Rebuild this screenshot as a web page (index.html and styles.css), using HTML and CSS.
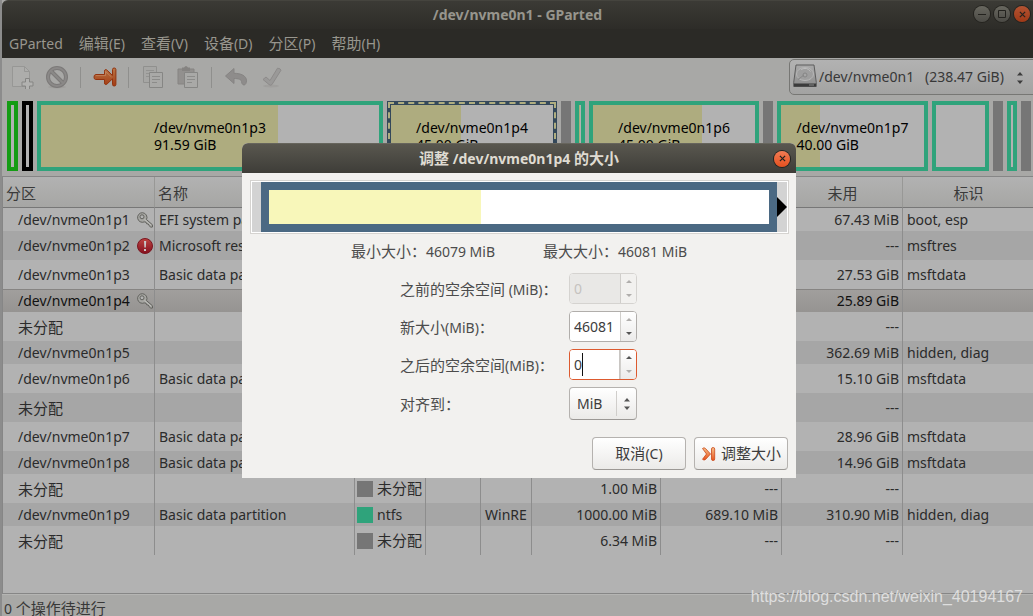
FILE: index.html
```html
<!DOCTYPE html>
<html lang="zh-CN">
<head>
<meta charset="utf-8">
<title>/dev/nvme0n1 - GParted</title>
<link rel="stylesheet" href="styles.css">
</head>
<body>
<svg class="defs" aria-hidden="true">
  <defs>
    <linearGradient id="orange" x1="0" y1="0" x2="0" y2="1"><stop offset="0" stop-color="#b97747"/><stop offset="1" stop-color="#a33a12"/></linearGradient>
    <linearGradient id="bright" x1="0" y1="0" x2="0" y2="1"><stop offset="0" stop-color="#f7c088"/><stop offset="1" stop-color="#e8521c"/></linearGradient>
    <linearGradient id="metal" x1="0" y1="0" x2="0" y2="1"><stop offset="0" stop-color="#a9a9a9"/><stop offset="1" stop-color="#8d8d8d"/></linearGradient>
    <linearGradient id="red" x1="0" y1="0" x2="0" y2="1"><stop offset="0" stop-color="#bd4440"/><stop offset="1" stop-color="#85101f"/></linearGradient>
    <symbol id="key" viewBox="0 0 16 16">
      <path d="M5.5.7a4.8 4.8 0 1 0 1.8 9.2l1.7.3.7 1.6 1.6.2.7 1.6 1.9 1.6 1.6-.2.1-2.1-6.1-5.3A4.8 4.8 0 0 0 5.500.7Z" fill="#a6a6a2" stroke="#62625e" stroke-width="1"/>
      <circle cx="5" cy="4.800" r="2" fill="#b4b4b4" stroke="#62625e"/>
      <path d="M7.500 7.500 14 13" stroke="#c2c2be" stroke-width=".9"/>
    </symbol>
    <symbol id="cross" viewBox="0 0 8 8"><path d="M1 1 7 7M7 1 1 7" fill="none" stroke="currentColor" stroke-width="1.400"/></symbol>
  </defs>
</svg>

<div class="window">
  <header class="titlebar">
    <h1>/dev/nvme0n1 - GParted</h1>
    <div class="controls">
      <button class="ctl" aria-label="最小化"><svg viewBox="0 0 8 8"><path d="M0 4.500H8" stroke="currentColor"/></svg></button>
      <button class="ctl" aria-label="最大化"><svg viewBox="0 0 8 8"><path d="M.5.5h7v7h-7z" fill="none" stroke="currentColor"/></svg></button>
      <button class="ctl ctl-close" aria-label="关闭"><svg><use href="#cross"/></svg></button>
    </div>
  </header>

  <nav class="menubar">
    <button class="lat">GParted</button>
    <button>编辑<span class="lat">(E)</span></button>
    <button>查看<span class="lat">(V)</span></button>
    <button>设备<span class="lat">(D)</span></button>
    <button>分区<span class="lat">(P)</span></button>
    <button>帮助<span class="lat">(H)</span></button>
  </nav>

  <div class="toolbar">
    <div class="tools">
      <button class="tool" aria-label="新建" disabled><svg viewBox="0 0 24 24"><path d="M2.500 1.500h12l5 5v15h-17z" fill="#adadab" stroke="#979795"/><path d="M14.500 1.500v5h5" fill="none" stroke="#979795"/><path d="M15.500 13.500h4v3.500h3.500v4h-3.500v3.500h-4V21H12v-4h3.500z" fill="#b2b2b0" stroke="#858583"/></svg></button>
      <button class="tool" aria-label="删除" disabled><svg viewBox="0 0 24 24"><ellipse cx="12" cy="22" rx="9" ry="1.500" fill="#a09f9d"/><circle cx="12" cy="12" r="9" fill="none" stroke="#7c7a79" stroke-width="4"/><path d="M5.500 5.500 18.500 18.500" stroke="#7c7a79" stroke-width="4"/><circle cx="12" cy="12" r="9" fill="none" stroke="#8b8988" stroke-width="2"/><path d="M6 6 18 18" stroke="#8b8988" stroke-width="2"/></svg></button>
      <span class="sep"></span>
      <button class="tool" aria-label="调整大小/移动"><svg viewBox="0 0 24 24"><path d="M2.500 9.500h9V6.200c0-2 1.600-2 2.700-.9l5.300 5.200V4.500q0-1.500 1.700-1.500t1.700 1.500v15q0 1.500-1.700 1.500t-1.700-1.500v-5.700l-5.300 5.100c-1.100 1-2.700 1-2.700-1v-3.400h-9q-1.500-.2-1.500-2.400t1.500-2.600Z" fill="url(#orange)" stroke="#92330f"/><path d="M3 10.600h9.500V6.500l6 5.500" fill="none" stroke="#c58b64" stroke-width=".7"/></svg></button>
      <span class="sep"></span>
      <button class="tool" aria-label="复制" disabled><svg viewBox="0 0 24 24"><path d="M2.500 1.500h13v16h-13z" fill="#a6a6a4" stroke="#90908e"/><path d="M5 5.500h8M5 8.500h8M5 11.500h3" stroke="#939391"/><path d="M8.500 7.500h13v15h-13z" fill="#a9a9a7" stroke="#868684"/><path d="M11 11.500h8M11 14.500h8M11 17.500h5" stroke="#8c8c8a"/></svg></button>
      <button class="tool" aria-label="粘贴" disabled><svg viewBox="0 0 24 24"><path d="M2 4h16v15H2z" fill="#92908e" stroke="#868482"/><path d="M6 2.500h2q2-3 4 0h2V6H6z" fill="#858381"/><path d="M8.500 7.500h13v15h-13z" fill="#a9a9a7" stroke="#868684"/><path d="M11 11.500h8M11 14.500h8M11 17.500h5" stroke="#8c8c8a"/></svg></button>
      <span class="sep"></span>
      <button class="tool" aria-label="撤消" disabled><svg viewBox="0 0 24 24"><path d="M1.500 11 10 3.500v4.800c7 0 12.500 2.500 12.500 7.500 0 2-1 4.200-2.500 4.200s-2.500-2-2.500-3.500c0-2-3-3-7.500-3v5z" fill="#8e8c8b" stroke="#868483"/></svg></button>
      <button class="tool" aria-label="应用" disabled><svg viewBox="0 0 24 24"><ellipse cx="12" cy="21" rx="8" ry="1.500" fill="#a09f9d"/><path d="M4 14.500 7 12l4 3.500 7.500-12.300q3 0 3.500 2L13 19.500q-1.500 1.500-3 0Z" fill="#9a9998" stroke="#8d8b8a"/></svg></button>
    </div>
    <div class="device">
      <svg class="disk" viewBox="0 0 24 24"><path d="M3 1h18l2.300 17.500v4H.7v-4z" fill="url(#metal)" stroke="#5d5d5d"/><path d="M1 19.500h22v3H1z" fill="#3b3b3b"/><path d="M16 21h5" stroke="#8a8a8a"/><ellipse cx="12" cy="10" rx="8.500" ry="6.500" fill="#9e9e9e" stroke="#b7b7b7"/><path d="M8 5.500q6-3 9.500 2" stroke="#bdbdbd" fill="none"/><circle cx="12" cy="11" r="2" fill="#a6a6a6" stroke="#858585"/><path d="M5 15.500 11 11" stroke="#868686"/></svg>
      <select aria-label="设备"><option>/dev/nvme0n1 &nbsp;&nbsp;(238.47 GiB)</option></select>
      <svg class="updown" viewBox="0 0 6 12"><path d="M0 3.500 3 0 6 3.500zM0 8.500 3 12 6 8.500z" fill="currentColor"/></svg>
    </div>
  </div>

  <div class="diskmap">
    <div class="part fat"></div>
    <div class="part unknown"></div>
    <div class="part"><i class="used u70"></i><p>/dev/nvme0n1p3<br>91.59 GiB</p></div>
    <div class="part picked"><i class="used u43"></i><p>/dev/nvme0n1p4<br>45.00 GiB</p></div>
    <div class="part free"></div>
    <div class="part"><i class="used u50"></i></div>
    <div class="part"><i class="used u67"></i><p>/dev/nvme0n1p6<br>45.00 GiB</p></div>
    <div class="part free"></div>
    <div class="part"><i class="used u27"></i><p>/dev/nvme0n1p7<br>40.00 GiB</p></div>
    <div class="part"></div>
    <div class="part free"></div>
    <div class="part"></div>
    <div class="part free"></div>
  </div>

  <main class="list">
    <table>
      <colgroup><col class="c-part"><col class="c-name"><col class="c-fs"><col class="c-mount"><col class="c-label"><col class="c-size"><col class="c-used"><col class="c-unused"><col></colgroup>
      <thead><tr><th class="left">分区</th><th class="left">名称</th><th></th><th></th><th></th><th></th><th></th><th>未用</th><th>标识</th></tr></thead>
      <tbody>
        <tr class="low"><td><div class="dev">/dev/nvme0n1p1<svg><use href="#key"/></svg></div></td><td>EFI system partition</td><td></td><td></td><td></td><td></td><td></td><td class="num">67.43 MiB</td><td>boot, esp</td></tr>
        <tr><td><div class="dev">/dev/nvme0n1p2<svg viewBox="0 0 16 16"><circle cx="8" cy="8" r="7.500" fill="url(#red)" stroke="#7b1520"/><path d="M7 3h2.200L8.800 9.500H7.400zM7 11h2v2H7z" fill="#c9c9c9"/></svg></div></td><td>Microsoft reserved partition</td><td></td><td></td><td></td><td></td><td></td><td class="num">---</td><td>msftres</td></tr>
        <tr><td><div class="dev">/dev/nvme0n1p3</div></td><td>Basic data partition</td><td></td><td></td><td></td><td></td><td></td><td class="num">27.53 GiB</td><td>msftdata</td></tr>
        <tr class="low selected"><td><div class="dev">/dev/nvme0n1p4<svg><use href="#key"/></svg></div></td><td></td><td></td><td></td><td></td><td></td><td></td><td class="num">25.89 GiB</td><td></td></tr>
        <tr><td><div class="dev zh">未分配</div></td><td></td><td></td><td></td><td></td><td></td><td></td><td class="num">---</td><td></td></tr>
        <tr class="low"><td><div class="dev">/dev/nvme0n1p5</div></td><td></td><td></td><td></td><td></td><td></td><td></td><td class="num">362.69 MiB</td><td>hidden, diag</td></tr>
        <tr><td><div class="dev">/dev/nvme0n1p6</div></td><td>Basic data partition</td><td></td><td></td><td></td><td></td><td></td><td class="num">15.10 GiB</td><td>msftdata</td></tr>
        <tr><td><div class="dev zh">未分配</div></td><td></td><td></td><td></td><td></td><td></td><td></td><td class="num">---</td><td></td></tr>
        <tr><td><div class="dev">/dev/nvme0n1p7</div></td><td>Basic data partition</td><td></td><td></td><td></td><td></td><td></td><td class="num">28.96 GiB</td><td>msftdata</td></tr>
        <tr class="low"><td><div class="dev">/dev/nvme0n1p8</div></td><td>Basic data partition</td><td></td><td></td><td></td><td></td><td></td><td class="num">14.96 GiB</td><td>msftdata</td></tr>
        <tr><td><div class="dev zh">未分配</div></td><td></td><td><div class="fs zh"><i></i>未分配</div></td><td></td><td></td><td class="num">1.00 MiB</td><td class="num">---</td><td class="num">---</td><td></td></tr>
        <tr class="low"><td><div class="dev">/dev/nvme0n1p9</div></td><td>Basic data partition</td><td><div class="fs ntfs"><i></i>ntfs</div></td><td></td><td>WinRE</td><td class="num">1000.00 MiB</td><td class="num">689.10 MiB</td><td class="num">310.90 MiB</td><td>hidden, diag</td></tr>
        <tr><td><div class="dev zh">未分配</div></td><td></td><td><div class="fs zh"><i></i>未分配</div></td><td></td><td></td><td class="num">6.34 MiB</td><td class="num">---</td><td class="num">---</td><td></td></tr>
      </tbody>
    </table>
  </main>
  <footer class="status"><span class="lat">0 </span>个操作待进行</footer>
</div>

<section class="dialog" role="dialog" aria-labelledby="dlg-title">
  <header class="dialog-title">
    <h2 id="dlg-title"><span class="zh">调整</span> /dev/nvme0n1p4 <span class="zh">的大小</span></h2>
    <button class="ctl ctl-close lit" aria-label="关闭"><svg><use href="#cross"/></svg></button>
  </header>
  <div class="dialog-body">
    <div class="resizer">
      <div class="resizer-part"><i></i></div>
      <svg class="grip" viewBox="0 0 10 20"><path d="M0 0 10 10 0 20z" fill="#000"/></svg>
    </div>
    <div class="limits"><span>最小大小&#xFF1A;<span class="lat">46079 MiB</span></span><span>最大大小&#xFF1A;<span class="lat">46081 MiB</span></span></div>
    <form class="fields">
      <label for="before">之前的空余空间<span class="lat"> (MiB)</span>&#xFF1A;</label>
      <div class="spin off"><input id="before" value="0" disabled><div class="steps"><button type="button" aria-label="增加" disabled></button><button type="button" class="down" aria-label="减少" disabled></button></div></div>
      <label for="size">新大小<span class="lat">(MiB)</span>&#xFF1A;</label>
      <div class="spin"><input id="size" value="46081"><div class="steps"><button type="button" aria-label="增加" disabled></button><button type="button" class="down" aria-label="减少"></button></div></div>
      <label for="after">之后的空余空间<span class="lat">(MiB)</span>&#xFF1A;</label>
      <div class="spin active"><input id="after" value="0"><span class="caret"></span><div class="steps"><button type="button" aria-label="增加"></button><button type="button" class="down" aria-label="减少" disabled></button></div></div>
      <label for="align">对齐到&#xFF1A;</label>
      <div class="align"><select id="align"><option>MiB</option></select><svg class="updown" viewBox="0 0 6 12"><path d="M0 3.500 3 0 6 3.500zM0 8.500 3 12 6 8.500z" fill="currentColor"/></svg></div>
    </form>
    <div class="actions">
      <button class="btn"><span>取消<span class="lat">(C)</span></span></button>
      <button class="btn"><svg viewBox="0 0 16 16"><path d="M1.500 2.500q1.500-1.500 3 0L9.500 8l-5 5.500q-1.500 1.200-3-.2L5.500 8z" fill="url(#bright)" stroke="#c9471b" stroke-width=".8"/><rect x="10.500" y="1.500" width="3.200" height="13" rx="1.500" fill="url(#bright)" stroke="#c9471b" stroke-width=".8"/></svg>调整大小</button>
    </div>
  </div>
</section>

<div class="watermark">https://blog.csdn.net/weixin_40194167</div>
</body>
</html>
```
FILE: styles.css
```css
* { box-sizing: border-box; }
body {
  margin: 0;
  height: 100vh;
  overflow: hidden;
  position: relative;
  background: #8c8c8c;
  color: #2b2b2b;
  font: 14px/17px "Noto Sans", "Noto Sans CJK JP", sans-serif;
}
button, select, input { font: inherit; color: inherit; margin: 0; }
button { border: 0; padding: 0; background: none; }
select { appearance: none; }
h1, h2, p { margin: 0; font-size: 14px; }
.defs { position: absolute; width: 0; height: 0; }
.lat { font-size: 14px; white-space: pre; }
.zh { font-size: 15px; }

.window {
  height: 100%;
  margin-left: 2px;
  display: flex;
  flex-direction: column;
  background: #a8a8a6;
}

/* Title bar and menu */
.titlebar {
  height: 29px;
  flex: none;
  display: grid;
  grid-template-columns: 1fr auto 1fr;
  align-items: center;
  border-radius: 6px 0 0 0;
  border-top: 1px solid #45443e;
  background: linear-gradient(#3b3a35, #2d2c28);
  color: #97958d;
}
.titlebar h1 { grid-column: 2; padding-bottom: 2px; }
.controls { display: flex; gap: 4px; justify-content: flex-end; padding: 0 3px 2px 0; }
.ctl {
  width: 16px;
  height: 16px;
  border-radius: 50%;
  display: grid;
  place-items: center;
  background: linear-gradient(#68675f, #4b4a45);
  box-shadow: 0 0 0 1px #24231f;
  color: #23221e;
}
.ctl svg { width: 8px; height: 8px; }
.ctl-close { background: linear-gradient(#b35332, #9f3917); }
.ctl-close.lit { background: linear-gradient(#f37c54, #e4501f); }
.ctl-close svg { width: 7px; height: 7px; }
.menubar {
  height: 29px;
  flex: none;
  display: flex;
  align-items: center;
  gap: 16px;
  padding: 0 7px;
  background: #2b2a26;
  color: #98968e;
  font-size: 15px;
}

/* Toolbar */
.toolbar { height: 40px; flex: none; display: flex; justify-content: space-between; align-items: flex-start; }
.tools { display: flex; align-items: center; gap: 11px; padding: 7px 8px; }
.tool { width: 24px; height: 24px; }
.tool svg { display: block; width: 24px; height: 24px; }
.sep { width: 2px; height: 21px; border-left: 1px solid #8f8f8d; }
.device { position: relative; margin: 1px -6px 0 0; }
.device select {
  width: 250px;
  height: 36px;
  padding: 0 28px 2px 29px;
  border: 1px solid #777774;
  border-radius: 5px;
  background: linear-gradient(#b2b2b2, #a3a3a2);
  color: #383838;
}
.disk { position: absolute; left: 4px; top: 5px; width: 24px; height: 24px; }
.updown { position: absolute; width: 6px; height: 12px; color: #3c3c3c; pointer-events: none; }
.device .updown { right: 16px; top: 13px; }

/* Partition map: one column per partition, in proportion */
.diskmap {
  flex: none;
  display: grid;
  grid-template-columns: 11fr 11fr 346fr 170fr 10fr 10fr 170fr 10fr 151fr 57fr 10fr 10fr 10fr;
  gap: 4px;
  padding: 3px 2px 5px 5px;
  color: #000;
}
.part { position: relative; min-width: 0; height: 70px; border: 4px solid #2fa37b; background: #b2b2b2; display: grid; place-items: center; }
.part p { position: relative; white-space: nowrap; }
.fat { border-color: #149c14; }
.unknown { border-color: #000; }
.free { border-color: #767676; background: #767676; }
.picked { border-color: #34485a; }
.picked::before { content: ""; position: absolute; inset: -3px; border: 2px dashed #b0ae80; }
.used { position: absolute; left: 0; top: 0; bottom: 0; background: #aeac7f; }
.u70 { width: 70%; } .u43 { width: 43%; } .u67 { width: 67%; } .u27 { width: 27%; } .u50 { width: 50%; }

/* Partition table */
.list { flex: 1; min-height: 0; overflow: hidden; background: #b2b2b2; border: 1px solid #868686; border-right: 0; }
table { width: 100%; table-layout: fixed; border-collapse: separate; border-spacing: 0; }
.c-part { width: 152px; } .c-name { width: 200px; } .c-fs { width: 71px; }
.c-mount { width: 55px; } .c-label { width: 51px; } .c-size { width: 129px; }
.c-used, .c-unused { width: 121px; }
th, td { padding: 0 3px 0 4px; border-right: 1px solid #8d8d8d; overflow: hidden; white-space: nowrap; text-align: left; }
th:last-child, td:last-child { border-right: 0; }
th {
  height: 31px;
  padding-top: 2px;
  text-align: center;
  font-weight: 400;
  font-size: 15px;
  color: #3a3a3a;
  background: linear-gradient(#b2b2b2, #a6a6a4);
  border-right-color: #989896;
  border-bottom: 1px solid #777;
}
th.left { text-align: left; padding-left: 3px; }
td { height: 29px; }
.low td { height: 23px; }
tbody tr:nth-child(even) { background: #a6a6a6; }
tbody .selected td { background: linear-gradient(#a19f9d, #969492); box-shadow: inset 0 1px #868482; color: #111; }
td:first-child { padding-right: 1px; }
.dev { display: flex; align-items: center; justify-content: space-between; padding-left: 11px; }
.dev svg { width: 16px; height: 16px; }
.dev.zh { padding-top: 2px; }
.num { text-align: right; }
.fs { display: flex; align-items: center; gap: 4px; margin-left: -2px; }
.fs i { width: 16px; height: 16px; background: #767676; }
.ntfs i { background: #2fa37b; }
.status { height: 22px; flex: none; padding: 5px 2px 0; font-size: 15px; line-height: 16px; border-top: 1px solid #b5b5b3; color: #383838; }

/* Resize dialog */
.dialog {
  position: absolute;
  left: 242px;
  top: 143px;
  width: 554px;
  border-radius: 6px 6px 0 0;
  overflow: hidden;
  background: #f2f1ef;
  color: #4c4c4c;
}
.dialog-title {
  height: 30px;
  display: grid;
  grid-template-columns: 1fr auto 1fr;
  align-items: center;
  padding: 0 6px;
  border-top: 1px solid #67655d;
  background: linear-gradient(#59574f, #3e3d38);
  color: #dfdbd2;
}
.dialog-title h2 { grid-column: 2; }
.dialog-title .ctl { justify-self: end; }
.dialog-body { padding: 7px 8px 8px; }
.resizer {
  display: flex;
  align-items: center;
  height: 54px;
  margin-right: -1px;
  padding: 1px 1px 1px 10px;
  border: 1px solid #d5d3d0;
  box-shadow: inset 0 0 0 1px #fff;
  background: #d3d3d3;
}
.resizer-part { flex: 1; height: 50px; border: 8px solid #4b6983; background: #fff; }
.resizer-part i { display: block; height: 100%; width: 42.4%; background: #f8f7ba; }
.grip { width: 10px; height: 20px; }
.limits { display: flex; justify-content: center; gap: 48px; padding: 8px 0 12px; font-size: 15px; line-height: 19px; }
.fields { display: grid; grid-template-columns: 169px 68px; gap: 7px 0; align-items: center; padding-left: 150px; font-size: 15px; }
.fields label { white-space: nowrap; padding-top: 2px; }
.spin { position: relative; display: flex; height: 31px; border: 1px solid #b1aeab; border-radius: 4px; overflow: hidden; background: #fff; font-size: 14px; }
.spin input { flex: 1; width: 0; min-width: 0; border: 0; padding: 0 4px; background: #fff; color: #3c3c3c; outline: 0; }
.steps { width: 16px; border-left: 1px solid #d0cecb; background: linear-gradient(#fff, #ecebea); display: grid; }
.steps button { display: grid; place-items: center; color: #555; }
.steps button:disabled { color: #b0aeac; }
.steps button::before { content: ""; border: 3px solid transparent; border-top: 0; border-bottom: 3px solid currentColor; }
.steps .down::before { border: 3px solid transparent; border-bottom: 0; border-top: 3px solid currentColor; }
.off { border-color: #d5d3d0; }
.off input { background: #e9e8e6; color: #c5c2bf; }
.off .steps { background: #f2f1ef; }
.active { border-color: #dd5a2f; }
.active .steps { box-shadow: 0 0 0 1px #c9c6c3; }
.caret { position: absolute; left: 12px; top: 3px; width: 1px; height: 23px; background: #111; }
.align { position: relative; }
.align select { width: 100%; height: 33px; padding: 0 7px; font-size: 14px; }
.align::after { content: ""; position: absolute; right: 20px; top: 4px; height: 25px; border-left: 1px solid #d0cecb; }
.align .updown { right: 7px; top: 11px; color: #555; }
.align select, .btn { border: 1px solid #b5b2af; border-bottom-color: #9b9895; border-radius: 4px; background: linear-gradient(#fff, #ebeae8); color: #3c3c3c; }
.actions { display: flex; justify-content: flex-end; gap: 8px; padding-top: 17px; }
.btn { width: 94px; height: 33px; display: flex; align-items: center; justify-content: center; gap: 4px; font-size: 15px; }
.btn svg { width: 16px; height: 16px; }

.watermark { position: absolute; right: 10px; bottom: 9px; font: 16px/20px "Liberation Sans", sans-serif; color: #dedede; }
```
